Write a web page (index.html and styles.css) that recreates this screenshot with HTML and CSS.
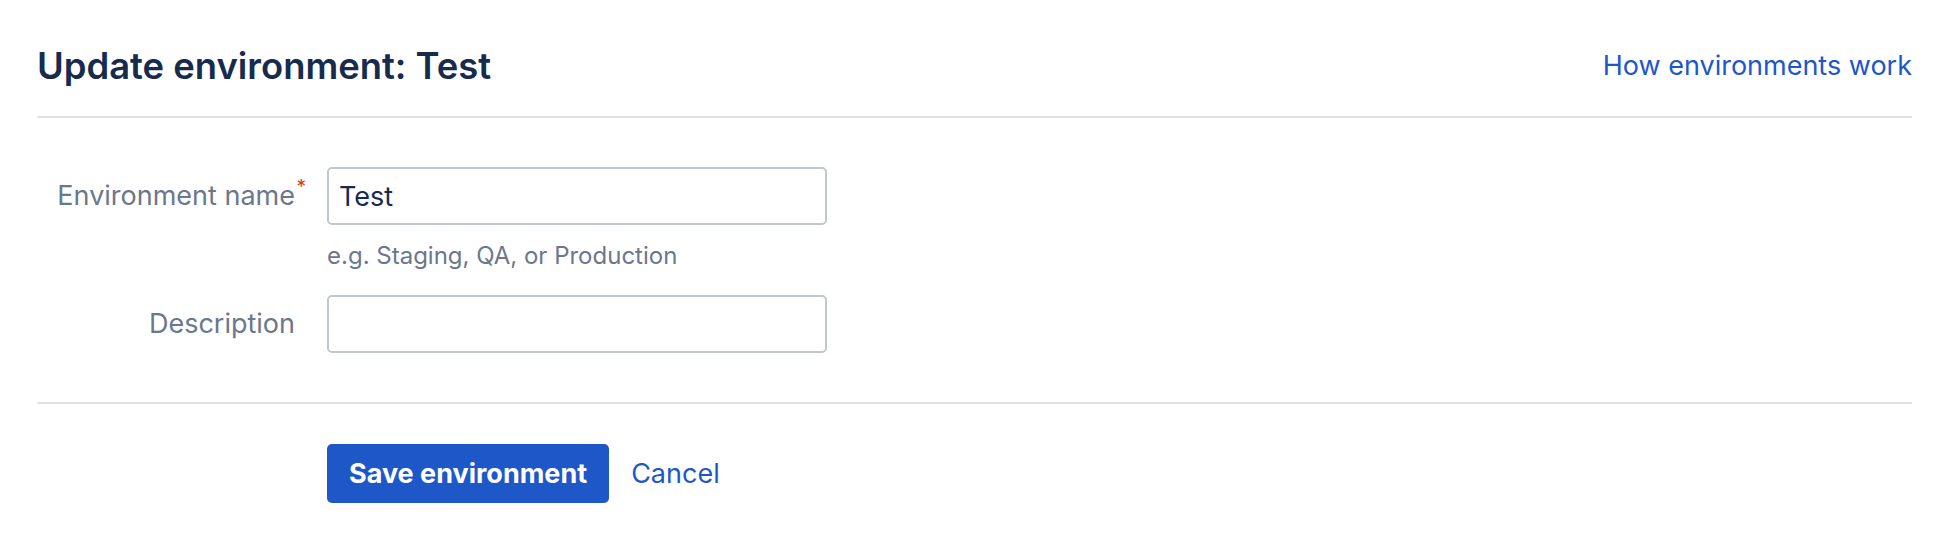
FILE: index.html
```html
<!DOCTYPE html>
<html lang="en">
<head>
<meta charset="utf-8">
<title>Update environment: Test</title>
<link rel="stylesheet" href="styles.css">
</head>
<body>
<div class="page">
  <header class="page-header">
    <h1 class="title">Update environment: Test</h1>
    <a class="help-link" href="#">How environments work</a>
  </header>
  <form class="env-form">
    <div class="field-row">
      <label class="field-label required" for="env-name">Environment name<span class="asterisk">*</span></label>
      <div class="field-control">
        <input class="text-input" id="env-name" type="text" value="Test">
        <div class="helper">e.g. Staging, QA, or Production</div>
      </div>
    </div>
    <div class="field-row">
      <label class="field-label" for="env-desc">Description</label>
      <div class="field-control">
        <input class="text-input" id="env-desc" type="text" value="">
      </div>
    </div>
    <div class="actions">
      <div class="actions-spacer"></div>
      <div class="actions-buttons">
        <button class="btn-primary" type="button">Save environment</button>
        <a class="cancel-link" href="#">Cancel</a>
      </div>
    </div>
  </form>
</div>
</body>
</html>
```
FILE: styles.css
```css
* { box-sizing: border-box; }
html, body {
  margin: 0;
  padding: 0;
  background: #ffffff;
}
body {
  font-family: Inter, "Noto Sans", "Liberation Sans", sans-serif;
  color: #172b4d;
}
.page {
  padding: 0 38px 0 37px;
}
.page-header {
  display: flex;
  justify-content: space-between;
  align-items: center;
  padding: 46px 0 30px;
  border-bottom: 2px solid #dfe1e6;
}
.title {
  margin: 0;
  font-size: 36.4px;
  font-weight: 600;
  line-height: 40px;
  color: #172b4d;
}
.help-link {
  font-size: 27px;
  line-height: 40px;
  color: #1d57c8;
  text-decoration: none;
}
.env-form {
  padding-top: 49px;
}
.field-row {
  display: grid;
  grid-template-columns: 258px 500px;
  column-gap: 32px;
  align-items: start;
  margin-bottom: 25px;
}
.field-row:last-of-type {
  margin-bottom: 0;
}
.field-label {
  position: relative;
  justify-self: end;
  height: 58px;
  line-height: 58px;
  font-size: 27px;
  color: #6b778c;
}
.asterisk {
  position: absolute;
  right: -11px;
  top: -9px;
  font-size: 19px;
  color: #de350b;
}
.text-input {
  display: block;
  width: 500px;
  height: 58px;
  border: 2px solid #c1c7d0;
  border-radius: 5px;
  padding: 0 10px;
  font-family: inherit;
  font-size: 27px;
  color: #172b4d;
  background: #ffffff;
  outline: none;
}
.helper {
  margin-top: 17px;
  font-size: 24px;
  line-height: 28px;
  color: #6b778c;
}
.actions {
  display: grid;
  grid-template-columns: 258px auto;
  column-gap: 32px;
  margin-top: 49px;
  padding-top: 40px;
  border-top: 2px solid #dfe1e6;
}
.actions-buttons {
  display: flex;
  align-items: center;
  gap: 22px;
}
.btn-primary {
  height: 59px;
  padding: 0 22px;
  border: none;
  border-radius: 5px;
  background: #1d57c8;
  color: #ffffff;
  font-family: inherit;
  font-size: 27px;
  font-weight: 700;
  cursor: pointer;
}
.cancel-link {
  font-size: 27px;
  color: #1d57c8;
  text-decoration: none;
}
```
